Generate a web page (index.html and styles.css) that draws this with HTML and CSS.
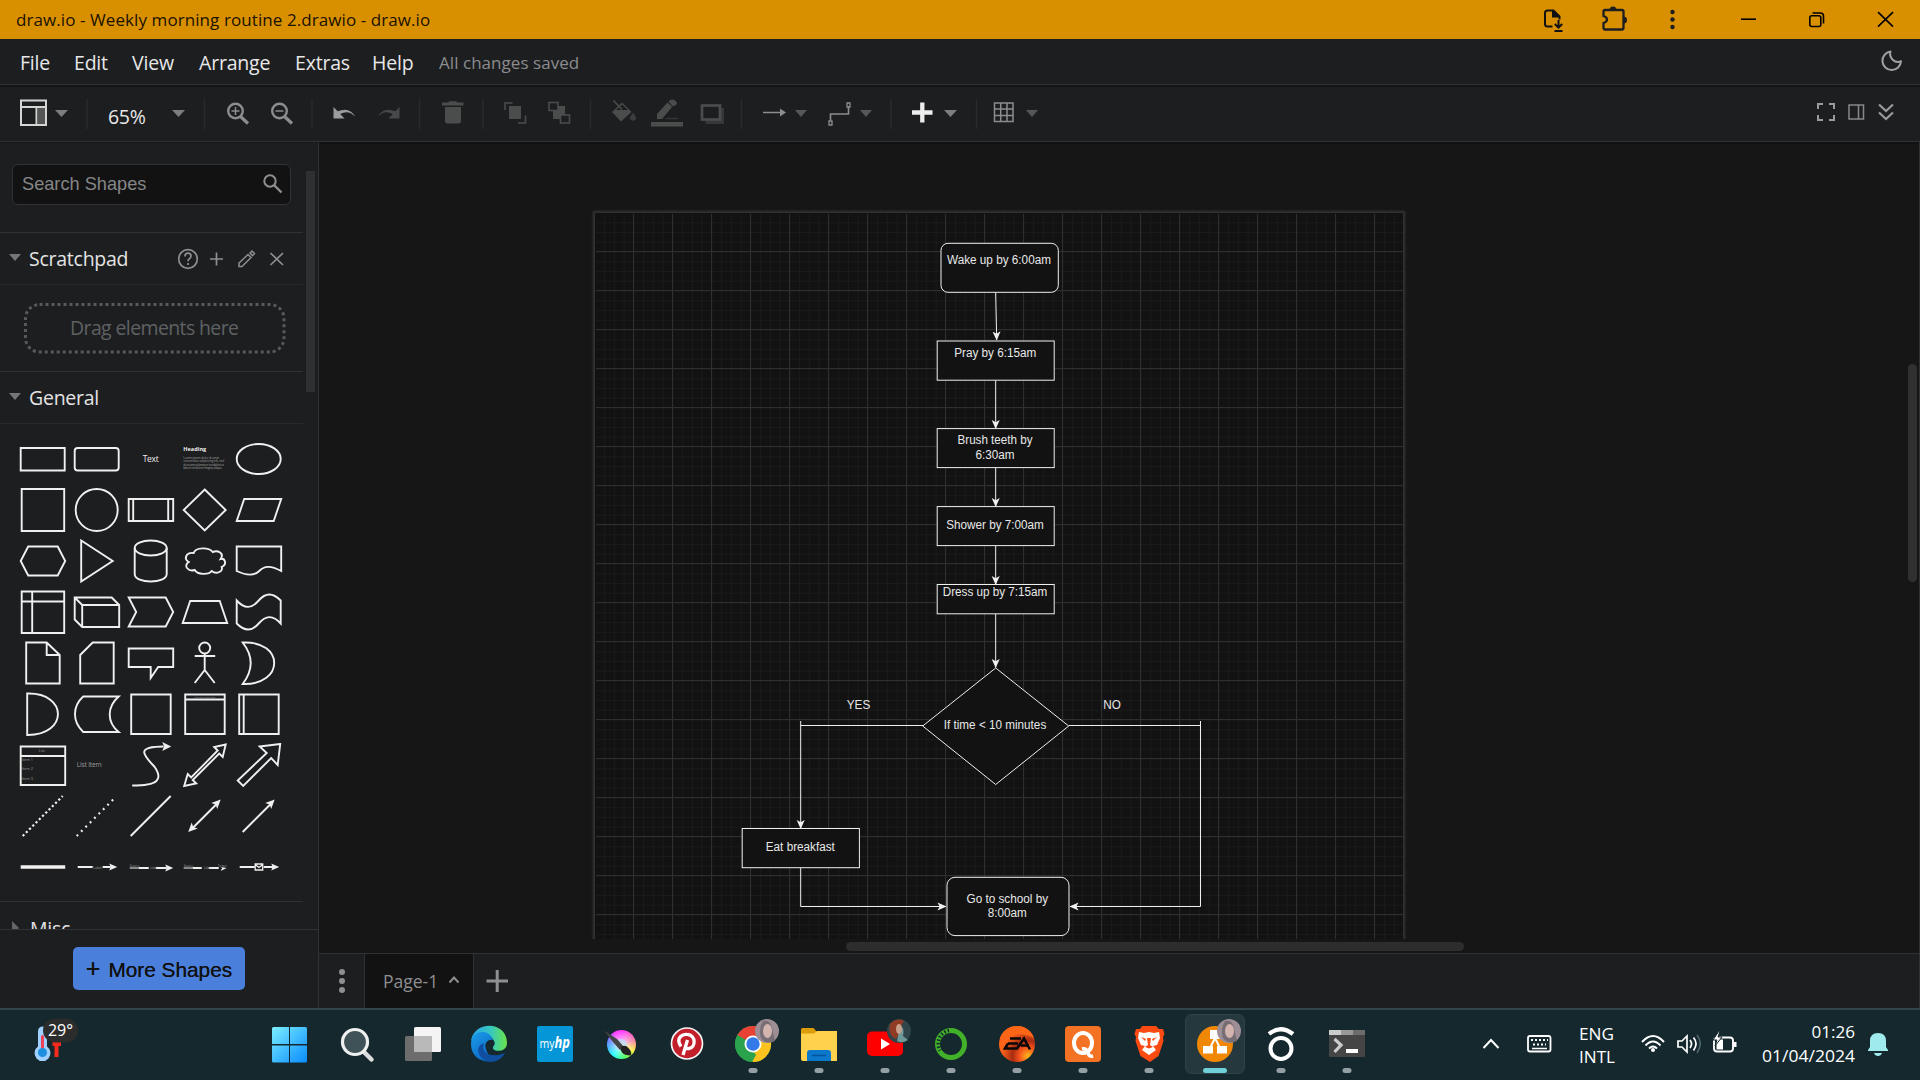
FILE: index.html
```html
<!DOCTYPE html>
<html lang="en">
<head>
<meta charset="utf-8">
<title>draw.io - Weekly morning routine 2.drawio - draw.io</title>
<link rel="stylesheet" href="styles.css">
</head>
<body>
<div class="app">
  <header class="titlebar">
    <span class="title">draw.io - Weekly morning routine 2.drawio - draw.io</span>
    <svg width="400" height="39" viewBox="1520 0 400 39" fill="none" stroke="#17130a" stroke-width="2">
      <path d="M1552.500 26.500h-5q-2.500 0-2.500-2.500V13q0-2.500 2.500-2.500h6l6 6v3M1553 10.500v6h6" stroke="#111"/>
      <path d="M1553 10.500v6.500h6.500z" fill="#111" stroke="none"/>
      <path d="M1558.500 20v7.500m-3.700-3.500 3.700 3.700 3.700-3.700M1554.500 31h8" stroke="#111"/>
      <path d="M1603.500 11.500q0-1.500 1.500-1.500h17q1.500 0 1.500 1.500v16q0 2-1.500 2h-17q-1.500 0-1.500-2v-4.500q3.500-1 3.500-3.500t-3.500-3.500z" stroke="#1d1e20" stroke-width="2.300"/>
      <path d="M1609.500 10a3.500 3.500 0 0 1 7 0zM1623.500 16.500a3.500 3.500 0 0 1 0 7z" fill="#1d1e20" stroke="none"/>
      <g fill="#1d1e20" stroke="none"><circle cx="1672.500" cy="12" r="2.200"/><circle cx="1672.500" cy="19.500" r="2.200"/><circle cx="1672.500" cy="27" r="2.200"/></g>
      <path d="M1741 19.200h15" stroke="#000" stroke-width="1.600"/>
      <rect x="1809.800" y="15.800" width="11" height="10.700" rx="2" stroke="#000" stroke-width="1.600"/>
      <path d="M1812.500 13h8q3 0 3 3v7.500" stroke="#000" stroke-width="1.600"/>
      <path d="M1878 12.200l15 14.500m0-14.500l-15 14.500" stroke="#000" stroke-width="1.600"/>
    </svg>
  </header>
  <nav class="menubar">
    <div class="menus"><span>File</span><span>Edit</span><span>View</span><span>Arrange</span><span>Extras</span><span>Help</span><span class="status">All changes saved</span></div>
    <svg width="60" height="45" viewBox="1860 39 60 45" fill="none" stroke="#a0a2a5" stroke-width="2"><path d="M1890.500 51.500a9.300 9.300 0 1 0 10.500 9.800 8 8 0 0 1-10.500-9.800z" stroke-linejoin="round"/></svg>
  </nav>
  <div class="toolbar">
    <svg width="100" height="54" viewBox="0 87 100 54">
      <path d="M21 100.500h25v24.500h-25zM21 107h25M36.500 107v18" fill="none" stroke="#d5d5d5" stroke-width="2"/><path d="M37.500 108h7.500v16h-7.500z" fill="#555"/>
      <path d="M55 110h13l-6.500 7z" fill="#7d7e80"/><path d="M87 99v30" stroke="#2a2b2e" stroke-width="1.500"/>
    </svg>
    <span class="zoom">65%</span>
    <svg width="270" height="54" viewBox="160 87 270 54" fill="none">
      <path d="M172 110h13l-6.500 7z" fill="#7d7e80"/>
      <g stroke="#8b8d8f" stroke-width="2.400"><circle cx="235.500" cy="111" r="7.300"/><path d="M240.500 116.500l7.500 7" stroke-width="3.200"/><path d="M231.500 111h8m-4-4v8" stroke-width="1.500"/><circle cx="279.500" cy="111" r="7.300"/><path d="M284.500 116.500l7.500 7" stroke-width="3.200"/><path d="M275.500 111h8" stroke-width="1.500"/></g>
      <path d="M333.500 107v11.500h11l-4.300-4.500q8.300-4.500 14.800 2.500-5.500-10-17.300-5.200z" fill="#9b9c9e"/>
      <path d="M399.500 107v11.500h-11l4.300-4.500q-8.300-4.500-14.800 2.500 5.500-10 17.300-5.200z" fill="#47494b"/>
      <path d="M204.500 99v30M312 99v30M419.500 99v30" stroke="#2a2b2e" stroke-width="1.500"/>
    </svg>
    <svg width="320" height="54" viewBox="430 87 320 54" fill="none">
      <g fill="#4b4d4d"><path d="M442 102.500h6l1.500-1.300h6.500l1.500 1.300h6v3h-21.500zM445 107h16v14q0 2.500-2.500 2.500h-11q-2.500 0-2.500-2.500z"/>
      <path d="M509 106h12v13h-12z"/><path d="M553 106h12v13h-12z"/></g>
      <g stroke="#4b4d4d" stroke-width="1.600"><path d="M505 110v-7h7.500M525.500 115.500v7.500h-7.500"/><path d="M549 102.500h9v8h-9zM560.500 115h9v8h-9z" fill="#1d1e20"/></g>
      <path d="M483 99v30M590.500 99v30M741.500 99v30" stroke="#2a2b2e" stroke-width="1.500"/>
      <path d="M612 112l10-9.500 9.500 9.500-10.500 9.500z" fill="#4b4d4d"/><path d="M616 110l6-5.500 6 5.500z" fill="#1d1e20"/><path d="M613.500 100.500l8.500 9" stroke="#4b4d4d" stroke-width="1.600"/><path d="M633 112.500q3.500 4.500 3.200 6-.7 2.300-3.200 2.300t-3.200-2.300q-.2-1.500 3.200-6z" fill="#3a3c3d"/>
      <path d="M657 119v-5l10.500-11.500 4.700 4.200-10.200 12.300zM668.500 101.500q3-3.500 6.500-1 3.500 2.500.7 4.700l-2.700 1.300z" fill="#4b4d4d"/><path d="M666 118.500h12" stroke="#333536" stroke-width="1.500"/><path d="M651 122h32v4.500h-32z" fill="#4b4d4d"/>
      <path d="M705.500 108h18.500v16h-18.500z" fill="#353738"/><rect x="702" y="105.500" width="18" height="14" fill="#1d1e20" stroke="#4b4d4d" stroke-width="2.700"/>
    </svg>
    <svg width="310" height="54" viewBox="750 87 310 54" fill="none">
      <path d="M763 112.500h18" stroke="#8b8d8f" stroke-width="1.500"/><path d="M780 108.500l6 4-6 4z" fill="#8b8d8f"/>
      <g fill="#55575a"><path d="M795 110h12l-6 7z"/><path d="M860 110h12l-6 7z"/><path d="M1026 110h12l-6 7z"/></g><path d="M944 110h13l-6.500 7z" fill="#7d7e80"/>
      <path d="M830.500 120.500v-6.500h18v-7.500" stroke="#8b8d8f" stroke-width="1.600"/><path d="M829 121h3v4h-3zM847 103h3v4h-3z" stroke="#8b8d8f" stroke-width="1.300"/>
      <path d="M912 112.500h20.500M922.300 102.500v20" stroke="#eee" stroke-width="4.300"/>
      <path d="M994.500 103h18.500v18.500h-18.500zM994.500 109h18.500M994.500 115.500h18.500M1000.700 103v18.500M1007 103v18.500" stroke="#8b8d8f" stroke-width="1.500"/>
      <path d="M891 99v30M976.500 99v30" stroke="#2a2b2e" stroke-width="1.500"/>
    </svg>
    <svg class="right" width="120" height="54" viewBox="1800 87 120 54" fill="none" stroke="#9a9b9d" stroke-width="2">
      <path d="M1818 109v-5h5m6 0h5v5m0 6v5h-5m-6 0h-5v-5"/><path d="M1849 105h14.500v14h-14.500zM1858.500 105v14" stroke-width="1.500" stroke="#86888a"/><path d="M1879 104.500l7 6.500 7-6.500M1879 112.500l7 6.500 7-6.500" stroke-width="2.200"/>
    </svg>
  </div>

  <main class="workspace">
    <aside class="sidebar">
      <div class="palettes">
        <div class="search"><span>Search Shapes</span><svg width="20" height="20" viewBox="0 0 20 20" fill="none" stroke="#8e8f91" stroke-width="2"><circle cx="7" cy="7" r="5.700"/><path d="M11 11l7.500 7.500" stroke-width="2.400"/></svg></div>
        <div class="section">
          <i class="caret"></i><b>Scratchpad</b>
          <svg class="scratch-tools" width="120" height="30" viewBox="172 244 120 30" fill="none" stroke="#8e8f91" stroke-width="1.700">
            <circle cx="188" cy="259" r="9.300"/><path d="M185 256.500q0-3.300 3-3.300t3 2.800q0 1.500-1.500 2.700t-1.500 2.500M188 263v2"/>
            <path d="M210 259h13M216.500 252.500v13"/><path d="M239 266.500v-3.500l9-8.500 3 3-9 9zM250 253l2-2 2.500 2.500-2 2.200z" stroke-width="1.500"/><path d="M270.500 253l12.500 12m0-12l-12.500 12"/>
          </svg>
        </div>
        <div class="dropwrap"><svg width="262" height="51" viewBox="0 0 262 51"><rect x="1.500" y="1.500" width="258.500" height="47.500" rx="14" fill="none" stroke="#57595b" stroke-width="3" stroke-dasharray="3 3"/><text x="130.500" y="32" text-anchor="middle" textLength="169" class="drop">Drag elements here</text></svg></div>
        <div class="section"><i class="caret"></i><b>General</b></div>
        <div class="shapes">
          <svg viewBox="-26.700 -25 54 51"><path d="M-22-11h44v22.500h-44z"/></svg>
          <svg viewBox="-26.700 -25 54 51"><rect x="-22" y="-11" width="44" height="22.500" rx="3"/></svg>
          <svg viewBox="-26.700 -25 54 51"><text x="0" y="3" text-anchor="middle" font-size="8.500" textLength="16">Text</text></svg>
          <svg viewBox="-26.700 -25 54 51"><text x="-21.500" y="-8" font-size="5.500" font-weight="bold" textLength="23">Heading</text><g><text x="-21.500" y="0" font-size="3.200" textLength="36">Lorem ipsum dolor sit amet</text><text x="-21.500" y="3.300" font-size="3.200" textLength="41">consectetur adipisicing elit, sed</text><text x="-21.500" y="6.700" font-size="3.200" textLength="41">do eiusmod tempor incididunt ut</text><text x="-21.500" y="10" font-size="3.200" textLength="39">labore et dolore magna aliqua.</text></g></svg>
          <svg viewBox="-26.700 -25 54 51"><ellipse rx="22" ry="15"/></svg>

          <svg viewBox="-26.700 -25 54 51"><path d="M-21-21h42.500v42h-42.500z"/></svg>
          <svg viewBox="-26.700 -25 54 51"><circle r="21"/></svg>
          <svg viewBox="-26.700 -25 54 51"><path d="M-22-11h44.500v22h-44.500zM-17.500-11v22M17.500-11v22"/></svg>
          <svg viewBox="-26.700 -25 54 51"><path d="M0-20.500l21 20.500-21 20.500-21-20.500z"/></svg>
          <svg viewBox="-26.700 -25 54 51"><path d="M-14.500-11h37l-7.500 22h-37z"/></svg>

          <svg viewBox="-26.700 -25 54 51"><path d="M-22 0l7.500-14.500h29.500l7.500 14.500-7.500 14.500h-29.500z"/></svg>
          <svg viewBox="-26.700 -25 54 51"><path d="M-15.500-20.500l31.500 20.500-31.500 20.500z"/></svg>
          <svg viewBox="-26.700 -25 54 51"><path d="M-16-13v26c0 10 32 10 32 0v-26"/><ellipse cy="-13" rx="16" ry="7.500"/></svg>
          <svg viewBox="-26.700 -25 54 51"><path d="M-11-8c-8-1-10 6-5 9-6 4 0 10 6 8 3 5 14 5 17 1 5 4 12 0 10-4 6-3 3-9-1-8 4-6-3-9-8-7-4-5-17-5-19 1z"/></svg>
          <svg viewBox="-26.700 -25 54 51"><path d="M-22-14.500h44.500v24.500c-11-6-17-5-22 0s-14 4-22.500 0z"/></svg>

          <svg viewBox="-26.700 -25 54 51"><path d="M-21-20.500h42.500v41.500h-42.500zM-10.500-20.500v41.500M-21-10.500h42.500"/></svg>
          <svg viewBox="-26.700 -25 54 51"><path d="M-22-14.500h37l7.500 7.500v22h-37l-7.500-7.500zM-14.500-7h37M-22-14.500l7.500 7.500v22"/></svg>
          <svg viewBox="-26.700 -25 54 51"><path d="M-22-14.500h37l7.500 14.500-7.500 14.500h-37l7.500-14.500z"/></svg>
          <svg viewBox="-26.700 -25 54 51"><path d="M-14.500-11h29.500l7.500 22h-44.500z"/></svg>
          <svg viewBox="-26.700 -25 54 51"><path d="M-22-11.500c8 9 15 8 22 0s14-8 22 0v23c-8-9-15-8-22 0s-14 8-22 0z"/></svg>

          <svg viewBox="-26.700 -25 54 51"><path d="M-16.500-20.500h20.500l13 12.500v28.500h-33.500zM4-20.500v12.500h13"/></svg>
          <svg viewBox="-26.700 -25 54 51"><path d="M-4-20.500h21v41h-33.500v-28.500z"/></svg>
          <svg viewBox="-26.700 -25 54 51"><path d="M-22-14.500h44.500v18.500h-15l-7.500 11v-11h-22z"/></svg>
          <svg viewBox="-26.700 -25 54 51"><circle cy="-15" r="5.500"/><path d="M0-9.500v16.500M-10-7h20.500M-10 20l10-13 10 13"/></svg>
          <svg viewBox="-26.700 -25 54 51"><path d="M-16-20.500c42-2 42 43 0 41.500q16-21 0-41.500z"/></svg>

          <svg viewBox="-26.700 -25 54 51"><path d="M-15.500-20.500c41-1 41 42 0 41.500z"/></svg>
          <svg viewBox="-26.700 -25 54 51"><path d="M22-17.500h-35.500c-11 10-11 25 0 35.500h35.500c-12-10-12-25 0-35.500z"/></svg>
          <svg viewBox="-26.700 -25 54 51"><path d="M-19.500-19.500h39.500v39.500h-39.500z"/></svg>
          <svg viewBox="-26.700 -25 54 51"><path d="M-19.500-19.500h39.500v39.500h-39.500zM-19.500-14.500h39.500"/><g><text x="0" y="-16" font-size="2.500" text-anchor="middle">Vertical Container</text></g></svg>
          <svg viewBox="-26.700 -25 54 51"><path d="M-19.500-19.500h39.500v39.500h-39.500zM-15-19.500v39.500"/></svg>

          <svg viewBox="-26.700 -25 54 51"><path d="M-22-18.500h44.500v38.500h-44.500zM-22-9h44.500"/><g font-size="3.800"><text x="-4" y="-13.500">List</text><text x="-21" y="-4">Item 1</text><text x="-21" y="5">Item 2</text><text x="-21" y="15">Item 3</text></g></svg>
          <svg viewBox="-26.700 -25 54 51"><g><text x="-20" y="2" font-size="6.700" textLength="25">List Item</text></g></svg>
          <svg viewBox="-26.700 -25 54 51"><path d="M-18.500 20.500c26 0 31-6 22.500-18.500-10-11-21-20.500 9-20.500"/><path class="solid" d="M20.500-18.500l-9-4.500 2 4.500-2 4.500z"/></svg>
          <svg viewBox="-26.700 -25 54 51"><path d="M21-20.500l-11.500 2.500 3.500 3.500-26.500 27-3.500-3.500-3.500 12 12-2.500-3.500-3.500 26.500-26.500 3.500 3.500z"/></svg>
          <svg viewBox="-26.700 -25 54 51"><path d="M21.500-21l-20.500 2.500 7 6.500-29 27.500 5.500 5.500 28-28 6.500 7z"/></svg>

          <svg viewBox="-26.700 -25 54 51"><path d="M-20 20l40-40" stroke-width="2.200" stroke-dasharray="2.200 2.400"/></svg>
          <svg viewBox="-26.700 -25 54 51"><path d="M-20 20l38-38" stroke-width="2.200" stroke-dasharray="1.900 4.300"/></svg>
          <svg viewBox="-26.700 -25 54 51"><path d="M-20 20l40-40"/></svg>
          <svg viewBox="-26.700 -25 54 51"><path d="M-13 13l26-26"/><path class="solid" d="M16-16.500l-9.500 3.500 4.500 1.500 1.500 4.500zM-16.500 16l3.500-9.500 1.500 4.500 4.500 1.500z"/></svg>
          <svg viewBox="-26.700 -25 54 51"><path d="M-16 16l29-29"/><path class="solid" d="M16-16.500l-9.500 3.500 4.500 1.500 1.500 4.500z"/></svg>

          <svg viewBox="-26.700 -25 54 51"><path d="M-22 0h44.500" style="stroke-width:3.700"/></svg>
          <svg viewBox="-26.700 -25 54 51"><path d="M-19 0h15M6 0h8"/><path class="solid" d="M20.500 0l-8-3.500 1.500 3.500-1.500 3.500z"/><g><text x="-3.500" y="1.500" font-size="3.500">Label</text></g></svg>
          <svg viewBox="-26.700 -25 54 51"><path d="M-21 1h9" stroke-width="1"/><path d="M-12 1h10M5 1h11"/><path class="solid" d="M22.500 1l-8-3.500 1.500 3.500-1.500 3.500z"/><g font-size="3"><text x="-21" y="0">Source</text><text x="-1" y="2">Label</text></g></svg>
          <svg viewBox="-26.700 -25 54 51"><path d="M-21 1h9" stroke-width="1"/><path d="M-12 1h9M4 1h10"/><path class="solid" d="M22 1l-6-1 1.500 1-1.500 3z"/><g font-size="3"><text x="-21" y="0">Source</text><text x="-1" y="2">Label</text><text x="13" y="0">Target</text></g></svg>
          <svg viewBox="-26.700 -25 54 51"><path d="M-19 0h15M5 0h10"/><path d="M-3.500-3h7.500v6h-7.500zM-3-2l3.300 2.500 3.200-2.500" stroke-width="1.300"/><path class="solid" d="M20.500 0l-8-3.500 1.500 3.500-1.500 3.500z"/></svg>
        </div>
        <div class="section misc"><svg width="30" height="30" viewBox="0 0 30 30"><path d="M12 8l7 7-7 7z" fill="#666"/></svg><b>Misc</b></div>
      </div>
      <div class="more"><button><span class="plus">+</span>More Shapes</button></div>
    </aside>

    <section class="editor">
      <div class="viewport">
        <svg class="diagram" width="1584" height="796" viewBox="319 143 1584 796">
          <defs>
            <pattern id="minor" x="594.400" y="212.500" width="9.750" height="9.750" patternUnits="userSpaceOnUse"><path d="M0 .5h9.750M.5 0v9.750" stroke="#1a1a1a" fill="none"/></pattern>
            <marker id="arrow" viewBox="0 0 10 10" refX="9.500" refY="5" markerWidth="9" markerHeight="9" orient="auto" markerUnits="userSpaceOnUse"><path d="M10 5L0 .5 2.500 5 0 9.500z" fill="#f0f0f0"/></marker>
            <filter id="glow" x="-5%" y="-5%" width="110%" height="110%"><feGaussianBlur stdDeviation="1.200"/></filter>
          </defs>
          <rect x="593" y="211" width="812" height="760" fill="#363636" filter="url(#glow)"/>
          <rect x="595" y="213" width="808" height="760" fill="#121212"/>
          <rect x="596" y="214" width="807" height="740" fill="url(#minor)"/>
          <path class="major" d="M633.500 214v740M672.500 214v740M711.500 214v740M750.500 214v740M789.500 214v740M828.500 214v740M867.500 214v740M906.500 214v740M945.500 214v740M984.500 214v740M1023.500 214v740M1062.500 214v740M1101.500 214v740M1140.500 214v740M1179.500 214v740M1218.500 214v740M1257.500 214v740M1296.500 214v740M1335.500 214v740M1374.500 214v740M596 251.500h807M596 290.500h807M596 329.500h807M596 368.500h807M596 407.500h807M596 446.500h807M596 485.500h807M596 524.500h807M596 563.500h807M596 602.500h807M596 641.500h807M596 680.500h807M596 719.500h807M596 758.500h807M596 797.500h807M596 836.500h807M596 875.500h807M596 914.500h807"/>
          <g class="edges">
            <path d="M995.700 292.500l1 47.500"/><path d="M995.700 380.500v48"/><path d="M995.700 468v38.500"/><path d="M995.700 546v38.500"/><path d="M995.700 614v53.500"/>
            <path d="M923 725.500H800.700"/><path d="M800.700 721v107.500"/><path d="M1068.700 725.500h131.800"/><path d="M800.700 868v38.500H946"/><path d="M1200.500 721v185.500H1070"/>
          </g>
          <g class="nodes">
            <rect x="941" y="243.300" width="117.300" height="49" rx="7"/><rect x="937.200" y="341" width="117" height="39.200"/><rect x="937.200" y="428.600" width="117" height="39"/><rect x="937.200" y="506.600" width="117" height="39"/><rect x="937.200" y="584.500" width="117" height="29.300"/>
            <path d="M995.700 668l73 58-73 58.500-73-58.500z"/><rect x="742.200" y="828.500" width="117.200" height="39.200"/><rect x="947" y="877.300" width="122" height="58.300" rx="8"/>
          </g>
          <g class="labels">
            <text x="999" y="264" textLength="104" lengthAdjust="spacingAndGlyphs">Wake up by 6:00am</text><text x="995.200" y="357" textLength="82" lengthAdjust="spacingAndGlyphs">Pray by 6:15am</text><text x="995" y="444" textLength="75" lengthAdjust="spacingAndGlyphs">Brush teeth by</text><text x="995" y="459" textLength="39" lengthAdjust="spacingAndGlyphs">6:30am</text><text x="995" y="529" textLength="97.500" lengthAdjust="spacingAndGlyphs">Shower by 7:00am</text><text x="995" y="596" textLength="104.500" lengthAdjust="spacingAndGlyphs">Dress up by 7:15am</text>
            <text x="995" y="729" textLength="102.500" lengthAdjust="spacingAndGlyphs">If time &lt; 10 minutes</text><text x="858.500" y="709" textLength="23.500" lengthAdjust="spacingAndGlyphs">YES</text><text x="1112" y="709" textLength="17.500" lengthAdjust="spacingAndGlyphs">NO</text><text x="800.300" y="851" textLength="69" lengthAdjust="spacingAndGlyphs">Eat breakfast</text><text x="1007.300" y="903" textLength="81.500" lengthAdjust="spacingAndGlyphs">Go to school by</text><text x="1007.300" y="917" textLength="39" lengthAdjust="spacingAndGlyphs">8:00am</text>
          </g>
        </svg>
        <div class="vscroll"><i></i></div>
      </div>
      <div class="hscroll"><i></i></div>
      <div class="tabs">
        <svg width="45" height="54" viewBox="319 954 45 54" fill="#8e8f91"><circle cx="342" cy="972" r="3"/><circle cx="342" cy="981" r="3"/><circle cx="342" cy="990" r="3"/></svg>
        <div class="tab"><span>Page-1</span><svg width="12" height="10" viewBox="0 0 12 10" fill="none" stroke="#8e8f91" stroke-width="2"><path d="M1.500 7.500l4.500-5 4.500 5"/></svg></div>
        <svg width="50" height="54" viewBox="474 954 50 54" stroke="#8e8f91" stroke-width="3"><path d="M486.500 981h21.500M497.200 970v22"/></svg>
      </div>
    </section>
  </main>

  <footer class="taskbar">
    <svg width="258" height="70" viewBox="0 1010 258 70">
      <path d="M38 1031a4.500 4.500 0 0 1 9 0v15.500a8 8 0 1 1-9 0z" fill="#9fd0ff"/><path d="M41 1036q1.500-2 3 0v13h-3z" fill="#f0405a"/><circle cx="42.500" cy="1052.500" r="4.500" fill="#1c8fe0"/>
      <path d="M52.500 1042h8.500v4h-2.500v11h-4v-11h-2z" fill="#f52a1c"/><rect x="43" y="1018.500" width="35" height="24" rx="12" fill="#2c2c2c"/><text x="48" y="1036" font-size="16" fill="#fff" textLength="25">29°</text>
    </svg>
    <svg class="t" viewBox="-33 1010 66 70"><defs><linearGradient id="win" gradientUnits="userSpaceOnUse" x1="-19" y1="1027" x2="16" y2="1062"><stop stop-color="#7beeff"/><stop offset="1" stop-color="#0a8cff"/></linearGradient></defs><path d="M-19 1028.500q0-1.500 1.500-1.500h15.500v17h-17zM-1 1027h15.500q1.500 0 1.500 1.500v15.500h-17zM-19 1045.500h17v17h-15.500q-1.500 0-1.500-1.500zM-1 1045.500h17v15.500q0 1.500-1.500 1.500h-15.500z" fill="url(#win)"/></svg>
    <svg class="t" viewBox="-33 1010 66 70"><path d="M6 1051l8.500 8.500" stroke="#ddd" stroke-width="4.500" stroke-linecap="round"/><circle cx="-2" cy="1042" r="12.500" fill="#3f5257" stroke="#efefef" stroke-width="3.200"/></svg>
    <svg class="t" viewBox="-33 1010 66 70"><rect x="-9" y="1027" width="27" height="25" rx="1.500" fill="#f4f4f4"/><rect x="-18" y="1036" width="27" height="25" rx="1.500" fill="#6d6d6d"/><path d="M-9 1036H9v16H-9z" fill="#b9b9b9"/></svg>
    <svg class="t" viewBox="-33 1010 66 70"><defs><linearGradient id="e1"><stop stop-color="#2aa5ea"/><stop offset=".55" stop-color="#36c8bf"/><stop offset="1" stop-color="#6be348"/></linearGradient><linearGradient id="e2" x1="0" y1="0" x2=".7" y2="1"><stop stop-color="#1b9de8"/><stop offset="1" stop-color="#0b62c4"/></linearGradient></defs>
      <path d="M-18 1041C-15 1020 18 1021 18 1043c0 10-14 9-14 5 0-3 3-3 1-7-6-12-19-6-23 0z" fill="url(#e1)"/><path d="M-18 1044c0-14 18-16 22-4-6-1-9 4-7 9 2 7 8 13 14 9-12 8-29 2-29-14z" fill="url(#e2)"/><path d="M-5 1043c-4 12 10 15 21 10-6 11-17 10-22 6s-8-13 1-16z" fill="#104fa0"/></svg>
    <svg class="t" viewBox="-33 1010 66 70"><rect x="-18" y="1026" width="36" height="36" rx="2" fill="#0496d7"/><text x="-15.500" y="1048" font-size="12" fill="#fff" textLength="15" lengthAdjust="spacingAndGlyphs">my</text><text x="-.5" y="1048" font-size="16" font-style="italic" font-weight="bold" fill="#fff" textLength="15.500" lengthAdjust="spacingAndGlyphs">hp</text></svg>
    <svg class="t" viewBox="-33 1010 66 70"><foreignObject x="-14" y="1030" width="29" height="29"><div class="krita"></div></foreignObject><circle cx="0" cy="1045" r="6" fill="#bbdff2" opacity=".8"/><path d="M-17 1030.500L-4 1039l7 8-4 3-7-8z" fill="#444"/><path d="M0 1046.500q5-2 7 1 4 4 3 8-7 0-9-3-2-3-1-6z" fill="#222"/></svg>
    <svg class="t" viewBox="-33 1010 66 70"><circle cy="1043.500" r="15.500" fill="#c31f2b" stroke="#f5f5f5" stroke-width="1.700"/><path d="M-4 1055l4.500-15M-6 1046.500c-6-9 2-13 7-12 8 1 8 13 1 14q-2.500.5-3.700-1.800" fill="none" stroke="#fff" stroke-width="3.300"/></svg>
    <svg class="t" viewBox="-33 1010 66 70"><circle cy="1044" r="18" fill="#2ba24c"/><path d="M0 1044L-15.600 1035a18 18 0 0 1 31.200 0z" fill="#e94235"/><path d="M0 1044l15.600-9A18 18 0 0 1 0 1062z" fill="#fcc31e"/><path d="M-8 1049l8-5 8 5-8 13z" fill="#fcc31e"/><path d="M-15.600 1035L-7 1049l7 2 3 4-4 7a18 18 0 0 1-14.600-27z" fill="#2ba24c"/><circle cy="1044" r="8.500" fill="#fff"/><circle cy="1044" r="6.700" fill="#3479e8"/><ellipse cx="14" cy="1031" rx="12" ry="12" fill="#9d8e95"/><path d="M10 1021q7-2 9 7l3 13q-9 4-14-3-3-9 2-17z" fill="#766d75"/><ellipse cx="14.500" cy="1031" rx="4.500" ry="7" fill="#d4b4af"/><rect class="dot" x="-4.500" y="1068" width="9" height="5" rx="2.500"/></svg>
    <svg class="t" viewBox="-33 1010 66 70"><path d="M-18 1029.500q0-1.500 1.500-1.500h11l3.500 4v4h-16z" fill="#dc9d08"/><path d="M-18 1033.500h13l3-2.500h20v30h-34q-2 0-2-2z" fill="#ffd14d"/><path d="M-12 1061v-8q0-3 3-3H9q3 0 3 3v8z" fill="#0b78cb"/><path d="M-7 1055.500H7" stroke="#07519a" stroke-width="1.500"/><rect class="dot" x="-4.500" y="1068" width="9" height="5" rx="2.500"/></svg>
    <svg class="t" viewBox="-33 1010 66 70"><rect x="-18" y="1031.500" width="36" height="24.500" rx="5" fill="#f00"/><path d="M-4 1038.500l9 5.500-9 5.500z" fill="#fff"/><circle cx="14" cy="1031" r="12" fill="#2f4549"/><path d="M5 1024q7-7 14-3-5 8-5 13l-3 5q-9-4-6-15z" fill="#903c25"/><path d="M15 1026q5 1 3 10l5 4q-6 4-11 1z" fill="#6e9999"/><ellipse cx="14" cy="1029" rx="3" ry="5" fill="#c8a28c"/><rect class="dot" x="-4.500" y="1068" width="9" height="5" rx="2.500"/></svg>
    <svg class="t" viewBox="-33 1010 66 70"><circle cy="1044" r="13.500" fill="none" stroke="#43b02a" stroke-width="5"/><path d="M-2 1030.500a13.500 13.500 0 0 0-9 20" fill="none" stroke="#14282e" stroke-width="3.500" stroke-dasharray="1.500 2"/><rect class="dot" x="-4.500" y="1068" width="9" height="5" rx="2.500"/></svg>
    <svg class="t" viewBox="-33 1010 66 70"><defs><radialGradient id="ea" gradientUnits="userSpaceOnUse" cx="11" cy="1056" r="26"><stop stop-color="#ffb81a"/><stop offset=".35" stop-color="#f4511c"/><stop offset=".6" stop-color="#a82c12"/><stop offset="1" stop-color="#ff6418"/></radialGradient></defs><circle cy="1044" r="18" fill="url(#ea)"/><path d="M-17 1038a18 18 0 0 1 34 0q-15-8-34 0z" fill="#fd6616"/><path d="M-7 1038.500H4M-9 1043.500H1M-4 1048.500h-8l3-5M-4 1048.500h4l7-10 6 11M4 1045.500h8" fill="none" stroke="#080808" stroke-width="2.600"/><rect class="dot" x="-4.500" y="1068" width="9" height="5" rx="2.500"/></svg>
    <svg class="t" viewBox="-33 1010 66 70"><rect x="-18" y="1026" width="36" height="36" rx="4" fill="#f47223"/><ellipse cy="1043" rx="9" ry="10" fill="none" stroke="#fff" stroke-width="4"/><path d="M-1 1049q5-1 6 4 1 4 5 3" fill="none" stroke="#fff" stroke-width="3.500"/><rect class="dot" x="-4.500" y="1068" width="9" height="5" rx="2.500"/></svg>
    <svg class="t" viewBox="-33 1010 66 70"><path d="M-7 1026H7l3 3 4 0 1.500 5-1.500 3 .5 4-5 15-8.500 6-9.500-6-5-15 .5-4-1.500-3 1.500-5h4z" fill="#fb4a12"/><path d="M-10 1032l5 1 5-1 5 1 5-1 1 6-3 7-4 1 3 4-7 5-7-5 3-4-4-1-3-7z" fill="#fff"/><path d="M-8 1037l5 2-1 2zM8 1037l-5 2 1 2zM-2 1038h4l-1 7 3 2-4 1.500-4-1.500 3-2z" fill="#fb4a12"/><rect class="dot" x="-4.500" y="1068" width="9" height="5" rx="2.500"/></svg>
    <svg class="t" viewBox="-33 1010 66 70"><rect x="-29.500" y="1014.500" width="59" height="59" rx="6" fill="#24383e" stroke="#304349"/><circle cy="1044" r="18" fill="#f08705"/><path d="M0 1038l-6 12M0 1038l6 12" stroke="#fff" stroke-width="2"/><path d="M-5 1030H5v9H-5zM-12 1046h10v7.500h-10zM2 1046h10v7.500H2z" fill="#fff"/><circle cx="14" cy="1031" r="12" fill="#9d8e95"/><path d="M10 1021q7-2 9 7l3 13q-9 4-14-3-3-9 2-17z" fill="#766d75"/><ellipse cx="14.500" cy="1031" rx="4.500" ry="7" fill="#d4b4af"/><rect x="-12" y="1068" width="24" height="5" rx="2.500" fill="#6fd0d8"/></svg>
    <svg class="t" viewBox="-33 1010 66 70"><circle cx="0" cy="1048.500" r="10.500" fill="none" stroke="#fff" stroke-width="4"/><path d="M-12 1034q11.500-9.500 24 0" fill="none" stroke="#fff" stroke-width="4.200"/><rect class="dot" x="-4.500" y="1068" width="9" height="5" rx="2.500"/></svg>
    <svg class="t" viewBox="-33 1010 66 70"><rect x="-18" y="1030" width="36" height="27" rx="1.500" fill="#454545"/><path d="M-18 1030h12v5h-12z" fill="#ccc"/><path d="M-6 1030H6v5H-6z" fill="#999"/><path d="M6 1030h12v5H6z" fill="#6c6c6c"/><path d="M-12.500 1039l6.500 6-6.500 7" fill="none" stroke="#ccc" stroke-width="3.200"/><path d="M-1 1049h12v4H-1z" fill="#fff"/><rect class="dot" x="-4.500" y="1068" width="9" height="5" rx="2.500"/></svg>
    <svg class="tray" width="460" height="70" viewBox="1460 1010 460 70" fill="none" stroke="#fff" stroke-width="2">
      <path d="M1483.500 1048l7.500-8 7.500 8"/>
      <rect x="1528" y="1036" width="22.500" height="15.500" rx="2" stroke-width="1.800"/><path d="M1531 1040h17M1533 1044.500h13" stroke-dasharray="2 2"/><path d="M1532 1048.500h15" stroke-width="1.500"/>
      <g fill="#fff" stroke="none" font-size="17"><text x="1579" y="1040" textLength="35" lengthAdjust="spacingAndGlyphs">ENG</text><text x="1579" y="1063" textLength="36" lengthAdjust="spacingAndGlyphs">INTL</text><text x="1811.500" y="1038" textLength="43.500" lengthAdjust="spacingAndGlyphs">01:26</text><text x="1762" y="1062" textLength="93" lengthAdjust="spacingAndGlyphs">01/04/2024</text></g>
      <path d="M1642 1042q11-12 22 0M1645.500 1045.500q7.500-8 15 0M1649 1048.500q4-4 8 0" stroke-width="1.900"/><circle cx="1653" cy="1050" r="2" fill="#fff" stroke="none"/>
      <path d="M1678 1041h4l5-5v16l-5-5h-4zM1690 1040q3 3.700 0 8M1693.500 1037.500q5 6 0 13" stroke-width="1.700"/><path d="M1697 1035q6.500 8.500 0 18" stroke="#53686d" stroke-width="1.500"/>
      <rect x="1714" y="1037.500" width="19" height="14" rx="3" stroke-width="1.900"/><path d="M1735 1042v5" stroke-width="3"/><path d="M1716.500 1039.500h6.500v10h-6.500z" fill="#fff" stroke="none"/><path d="M1719 1031l-6 9h4l-2 6 7-9h-4l2-6z" fill="#fff" stroke="#14282e" stroke-width="1"/>
      <path d="M1868 1051v-1l2-3v-6q0-8 8-8t8 8v6l2 3v1zM1874 1053h8q-1 3-4 3t-4-3z" fill="#9feaec" stroke="none"/>
    </svg>
  </footer>
</div>
</body>
</html>
```
FILE: styles.css
```css
* { box-sizing: border-box; }
body { margin: 0; background: #1d1e20; overflow: hidden; font-family: "Open Sans", "Noto Sans", sans-serif; }
svg { display: block; flex: none; }
.app { width: 1920px; height: 1080px; display: flex; flex-direction: column; }

.titlebar { height: 39px; background: #d99000; display: flex; align-items: center; justify-content: space-between; color: #1a1203; }
.title { padding-left: 16px; font-size: 17px; letter-spacing: .08px; white-space: nowrap; }

.menubar { height: 46px; border-bottom: 1px solid #303235; display: flex; justify-content: space-between; }
.menus { display: grid; grid-template-columns: 54px 58px 67px 96px 77px 67px auto; padding-left: 20px; padding-top: 2px; align-items: center; font-size: 19.500px; letter-spacing: -.2px; color: #e8e8e8; white-space: nowrap; }
.status { font-size: 17px; letter-spacing: .05px; color: #8b8c8e; margin-top: -1px; }

.toolbar { height: 57px; border-top: 2px solid #151617; border-bottom: 1px solid #303235; display: flex; align-items: flex-start; }
.zoom { width: 60px; padding-left: 8px; padding-top: 16px; font-size: 19.500px; line-height: 27px; color: #e8e8e8; letter-spacing: -.3px; }
.right { margin-left: auto; }

.workspace { height: 866px; display: flex; border-right: 1px solid #303235; }
.sidebar { width: 319px; border-top: 1px solid #151617; border-right: 1px solid #303235; display: flex; flex-direction: column; }
.palettes { height: 786px; overflow: hidden; width: 318px; padding-top: 21px; background: linear-gradient(#2f3032, #2f3032) 306px 28px / 9px 221px no-repeat; }
.search { margin: 0 27px 27px 12px; height: 41px; border: 1px solid #303235; border-radius: 6px; background: #121212; display: flex; align-items: center; justify-content: space-between; padding: 0 7px 1px 9px; font: 18.200px "Liberation Sans", sans-serif; color: #858688; }
.section { height: 53px; width: 303px; border-top: 1px solid #303235; border-bottom: 1px solid #28292c; display: flex; align-items: center; }
.section b { font-weight: 500; font-size: 19.500px; color: #e4e4e4; letter-spacing: -.25px; }
.caret { width: 0; border: 6.500px solid transparent; border-top: 7px solid #757678; border-bottom: 0; margin: -2px 8px 0 9px; }
.scratch-tools { margin-left: auto; margin-right: 11px; }
.dropwrap { padding: 18px 0 17px 24px; height: 86px; }
.drop { font-size: 19.500px; fill: #5f6163; }
.shapes { display: grid; grid-template-columns: repeat(5, 54px); grid-auto-rows: 51px; padding: 10px 0 8px 16px; height: 477px; }
.shapes svg { width: 54px; height: 51px; fill: none; stroke: #f0f0f0; stroke-width: 1.900; }
.shapes text { fill: #eee; stroke: none; }
.shapes g text { fill: #999; }
.shapes .solid { fill: #f0f0f0; stroke: none; }
.misc { border-bottom: 0; }
.more { flex: 1; border-top: 1px solid #303235; padding: 17px 0 0 73px; }
.more button { width: 172px; height: 43px; padding: 2px 0 0; border: 0; border-radius: 5px; background: #4a80dc; color: #111; font: 20.800px "Liberation Sans", sans-serif; white-space: nowrap; text-shadow: 0 0 .5px #111; }
.plus { margin-right: 8px; font-size: 25px; line-height: 20px; }

.editor { flex: 1; display: flex; flex-direction: column; background: #161616; }
.viewport { height: 798px; display: flex; border-top: 2px solid #111213; }
.diagram { margin-top: -1px; }
.vscroll { padding: 220px 0 0 5px; }
.vscroll i { display: block; width: 9px; height: 218px; border-radius: 5px; background: #303030; }
.major { fill: none; stroke: #2f2f2f; }
.edges path { fill: none; stroke: #f0f0f0; stroke-width: 1; marker-end: url(#arrow); }
.edges path:nth-child(6), .edges path:nth-child(8) { marker-end: none; }
.nodes { fill: #121212; stroke: #f0f0f0; stroke-width: 1; }
.labels { font: 12.500px "Liberation Sans", sans-serif; fill: #e8e8e8; text-anchor: middle; }
.hscroll { height: 13px; padding: 2px 0 0 527px; }
.hscroll i { display: block; width: 618px; height: 9px; border-radius: 5px; background: #2d2d2d; }
.tabs { flex: 1; border-top: 1px solid #303235; background: #1d1e20; display: flex; }
.tab { width: 110px; border: solid #303235; border-width: 0 1px; background: #121212; display: flex; align-items: center; gap: 10px; padding-left: 18px; color: #8e8f91; font-size: 17.500px; }
.tab svg { margin-top: -2px; }

.taskbar { height: 72px; border-top: 2px solid #30464a; background: #14282e; display: flex; }
.t { width: 66px; height: 70px; }
.tray { margin-left: auto; }
.dot { fill: #94a0a3; }
.krita { width: 29px; height: 29px; border-radius: 50%; background: radial-gradient(circle, #ffffffb0 0 10%, transparent 70%), conic-gradient(#f3f 0, #f37fa0 20%, #ffee40 33%, #4cff50 45%, #2ff 60%, #58f 78%, #f3f 92%); }
```
